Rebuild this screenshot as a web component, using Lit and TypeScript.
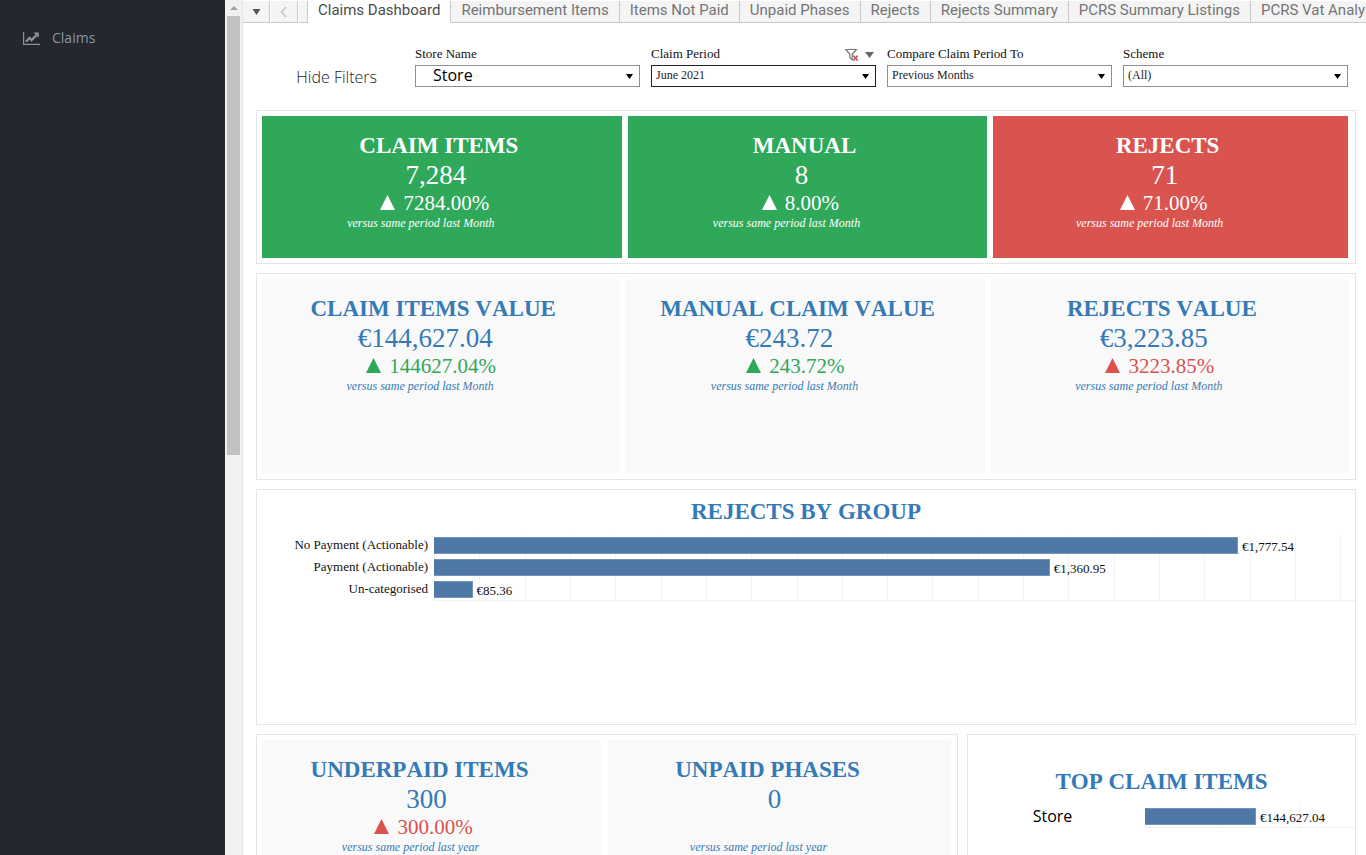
import { LitElement, html, css, svg, nothing } from "lit";
import { customElement, property, state } from "lit/decorators.js";
import { classMap } from "lit/directives/class-map.js";
import { styleMap } from "lit/directives/style-map.js";

interface Bar {
  label: string;
  value: number;
}

const euro = (n: number) =>
  "€" + n.toLocaleString("en-US", { minimumFractionDigits: 2, maximumFractionDigits: 2 });

@customElement("kpi-card")
export class KpiCard extends LitElement {
  @property() heading = "";
  @property() value = "";
  @property() change = "";
  @property() period = "Month";
  @property() tone = "up";
  @property({ reflect: true }) variant = "value";

  static styles = css`
    :host {
      display: block;
      box-sizing: border-box;
      padding-top: 16px;
      background: #f9f9f9;
      color: #337ab7;
      font-family: "Liberation Serif", "Times New Roman", serif;
      text-align: center;
      white-space: nowrap;
    }
    :host([variant="good"]) {
      background: #2fa85a;
      color: #fff;
    }
    :host([variant="bad"]) {
      background: #d9534f;
      color: #fff;
    }
    .title {
      margin: 0;
      padding-right: 16px;
      font-size: 23px;
      line-height: 28px;
      font-weight: bold;
      font-kerning: none;
    }
    .figure {
      margin: 0;
      padding-right: 32px;
      font-size: 27px;
      line-height: 30px;
    }
    .change {
      margin: 0;
      padding-right: 20px;
      min-height: 27px;
      font-size: 21px;
      line-height: 27px;
    }
    .mark {
      width: 15px;
      height: 15px;
      margin-right: 8px;
      fill: currentColor;
    }
    .up {
      color: #2fa85a;
    }
    .down {
      color: #d9534f;
    }
    .note {
      margin: 0;
      padding-right: 42px;
      font-size: 12px;
      line-height: 12px;
      font-style: italic;
    }
    .period {
      color: #4e79a7;
    }
    :host([variant="good"]) .title,
    :host([variant="bad"]) .title {
      padding-right: 6px;
    }
    :host([variant="good"]) .figure,
    :host([variant="bad"]) .figure {
      padding-right: 12px;
    }
    :host([variant="good"]) .change,
    :host([variant="bad"]) .change {
      padding-right: 14px;
      color: #fff;
    }
    :host([variant="good"]) .period,
    :host([variant="bad"]) .period {
      color: #fff;
    }
    :host([variant="count"]) .title {
      padding-right: 24px;
    }
    :host([variant="count"]) .figure {
      padding-right: 10px;
    }
    :host([variant="count"]) .change {
      padding-right: 16px;
    }
    :host([variant="count"]) .period {
      color: inherit;
    }
  `;

  render() {
    return html`
      <h2 class="title">${this.heading}</h2>
      <p class="figure">${this.value}</p>
      <p class="change ${this.tone}">
        ${this.change
          ? html`<svg class="mark" viewBox="0 0 15 15" aria-hidden="true"><path d="M7.5 0 15 15H0z" /></svg>${this.change}`
          : nothing}
      </p>
      <p class="note">versus same period last <span class="period">${this.period}</span></p>
    `;
  }
}

@customElement("bar-chart")
export class BarChart extends LitElement {
  @property({ attribute: false }) bars: Bar[] = [];
  @property({ type: Number }) max = 100;
  @property({ reflect: true }) variant = "wide";

  static styles = css`
    :host {
      display: grid;
      grid-template-columns: 177px 1fr;
      font: 13px/22px "Liberation Serif", "Times New Roman", serif;
      color: #111;
    }
    .labels {
      padding-right: 6px;
      text-align: right;
    }
    .label,
    .row {
      height: 22px;
      white-space: nowrap;
    }
    .plot {
      border-bottom: 1px solid #f0f0f0;
      background: repeating-linear-gradient(to right, #f3f3f3 0 1px, transparent 1px 4.92%);
    }
    .row {
      display: flex;
      align-items: center;
      gap: 4px;
    }
    .bar {
      box-sizing: border-box;
      height: 17px;
      flex: none;
      background: #4e79a7;
      border: 1px solid #7294b8;
      border-left: 0;
    }
    .amount {
      line-height: 22px;
      padding-top: 3px;
    }
    :host([variant="narrow"]) .labels {
      padding-right: 8px;
      text-align: center;
      font: 16px/22px "Open Sans", "Noto Sans", sans-serif;
      color: #000;
    }
    :host([variant="narrow"]) .plot {
      background: repeating-linear-gradient(to right, #f3f3f3 0 1px, transparent 1px 36.6%);
    }
  `;

  render() {
    return html`
      <div class="labels">${this.bars.map((b) => html`<div class="label">${b.label}</div>`)}</div>
      <div class="plot">
        ${this.bars.map(
          (b) => html`<div class="row">
            <div class="bar" style=${styleMap({ width: `${(b.value / this.max) * 100}%` })}></div>
            <span class="amount">${euro(b.value)}</span>
          </div>`
        )}
      </div>
    `;
  }
}

@customElement("app-root")
export class AppRoot extends LitElement {
  @state() private active = 0;

  private tabs = [
    "Claims Dashboard",
    "Reimbursement Items",
    "Items Not Paid",
    "Unpaid Phases",
    "Rejects",
    "Rejects Summary",
    "PCRS Summary Listings",
    "PCRS Vat Analysis",
  ];

  private filters = [
    { id: "store", label: "Store Name", value: "Store" },
    { id: "period", label: "Claim Period", value: "June 2021" },
    { id: "compare", label: "Compare Claim Period To", value: "Previous Months" },
    { id: "scheme", label: "Scheme", value: "(All)" },
  ];

  private rejects: Bar[] = [
    { label: "No Payment (Actionable)", value: 1777.54 },
    { label: "Payment (Actionable)", value: 1360.95 },
    { label: "Un-categorised", value: 85.36 },
  ];

  private topItems: Bar[] = [{ label: "Store", value: 144627.04 }];

  static styles = css`
    :host {
      display: flex;
      height: 100vh;
      overflow: hidden;
      background: #fff;
      font-family: "Liberation Serif", "Times New Roman", serif;
    }
    .sidebar {
      flex: 0 0 225px;
      background: #24272e;
    }
    .nav-link {
      display: flex;
      align-items: center;
      gap: 12px;
      padding: 27px 23px;
      color: #8595a8;
      font: 14px/22px "Open Sans", "Noto Sans", sans-serif;
      text-decoration: none;
    }
    .nav-icon {
      width: 17px;
      height: 13px;
      fill: none;
      stroke: #8a919c;
    }
    .scroll {
      flex: 0 0 17px;
      display: flex;
      flex-direction: column;
      align-items: center;
      background: #f1f1f1;
      border-right: 1px solid #e4e4e4;
    }
    .scroll-up {
      width: 8px;
      height: 16px;
      fill: #a3a3a3;
    }
    .scroll-thumb {
      width: 13px;
      height: 51.3%;
      background: #c1c1c1;
    }
    .main {
      flex: 1;
      min-width: 0;
      overflow: hidden;
    }
    .tabs {
      display: flex;
      height: 22px;
      padding-top: 1px;
      overflow: hidden;
    }
    .tab,
    .tool {
      flex: none;
      box-sizing: border-box;
      height: 22px;
      margin: 0;
      border: 0;
      border-right: 1px solid #c8c8c8;
      border-bottom: 1px solid #c8c8c8;
      background: #f4f4f4;
      white-space: nowrap;
    }
    .tab {
      padding: 0 10px 2px;
      color: #757575;
      font: 15px/19px "Roboto", "Open Sans", sans-serif;
    }
    .tab.active {
      background: #fff;
      border-bottom-color: #fff;
      color: #4c4c4c;
    }
    .tool {
      width: 27px;
      margin-right: 1px;
      padding: 0;
    }
    .tool-icon {
      display: block;
      width: 9px;
      height: 10px;
      margin: 0 auto;
    }
    .spacer {
      flex: 0 0 8px;
      border-right: 1px solid #c8c8c8;
      border-bottom: 1px solid #c8c8c8;
      background: #f4f4f4;
    }
    .filters {
      display: grid;
      grid-template-columns: 161px repeat(4, 1fr);
      column-gap: 11px;
      padding: 22px 18px 23px 0;
    }
    .hide {
      align-self: end;
      justify-self: end;
      margin: 0 27px 0 0;
      padding: 0;
      border: 0;
      background: none;
      color: #222;
      font: 300 16px/20px "Open Sans", "Noto Sans", sans-serif;
      white-space: nowrap;
    }
    .filter-head {
      display: flex;
      align-items: center;
      gap: 6px;
      height: 20px;
    }
    .filter-label {
      flex: 1;
      padding-bottom: 2px;
      color: #111;
      font-size: 13px;
      line-height: 18px;
    }
    .clear {
      width: 14px;
      height: 14px;
    }
    .caret {
      width: 9px;
      height: 6px;
      margin-right: 2px;
      fill: #666;
    }
    .box {
      display: grid;
      align-items: center;
    }
    .select {
      grid-area: 1 / 1;
      box-sizing: border-box;
      width: 100%;
      height: 22px;
      padding: 0 20px 2px 4px;
      border: 1px solid #8f8f8f;
      border-radius: 0;
      background: #fff;
      appearance: none;
      color: #222;
      font: 12px/18px "Liberation Serif", "Times New Roman", serif;
    }
    .select.current {
      border-color: #222;
    }
    .select.large {
      padding-left: 17px;
      padding-bottom: 4px;
      color: #000;
      font: 16px/18px "Open Sans", "Noto Sans", sans-serif;
    }
    .arrow {
      grid-area: 1 / 1;
      justify-self: end;
      width: 7px;
      height: 5px;
      margin-right: 7px;
      pointer-events: none;
      fill: #000;
    }
    .panels {
      display: flex;
      flex-direction: column;
      gap: 9px;
      padding: 0 10px 0 13px;
    }
    .panel {
      box-sizing: border-box;
      border: 1px solid #e5e5e5;
      background: #fff;
    }
    .counts {
      display: grid;
      grid-template-columns: 360fr 360fr 355fr;
      gap: 6px;
      min-height: 154px;
      padding: 5px 7px 5px 5px;
    }
    .values {
      display: grid;
      grid-template-columns: repeat(3, 1fr);
      gap: 6px;
      min-height: 207px;
      padding: 5px 6px 6px 5px;
    }
    .chart {
      min-height: 236px;
    }
    .chart-title {
      margin: 0;
      padding: 8px 0;
      color: #337ab7;
      font-size: 23px;
      line-height: 28px;
      text-align: center;
      font-kerning: none;
    }
    .bottom {
      display: grid;
      grid-template-columns: 702fr 389fr;
      gap: 9px;
    }
    .unpaid {
      display: grid;
      grid-template-columns: 339fr 343fr;
      gap: 7px;
      min-height: 208px;
      padding: 5px 6px 6px 5px;
    }
    .top-title {
      padding: 33px 0 9px;
    }
  `;

  private renderFilter(f: { id: string; label: string; value: string }) {
    return html`
      <div class="filter">
        <div class="filter-head">
          <label class="filter-label" for=${f.id}>${f.label}</label>
          ${f.id === "period"
            ? html`<svg class="clear" viewBox="0 0 14 14" aria-hidden="true">
                  <path d="M.8 1.5h10.6L7.2 6v5.6L4.8 9.6V6z" fill="none" stroke="#777" stroke-width="1.2" />
                  <path d="M8.2 7.6l4.6 5M12.8 7.6l-4.6 5" stroke="#c85a56" stroke-width="1.6" />
                </svg>
                <svg class="caret" viewBox="0 0 9 6" aria-hidden="true"><path d="M0 0h9L4.5 6z" /></svg>`
            : nothing}
        </div>
        <div class="box">
          <select
            id=${f.id}
            class=${classMap({ select: true, current: f.id === "period", large: f.id === "store" })}
          >
            <option>${f.value}</option>
          </select>
          <svg class="arrow" viewBox="0 0 7 5" aria-hidden="true"><path d="M0 0h7L3.5 5z" /></svg>
        </div>
      </div>
    `;
  }

  render() {
    return html`
      <nav class="sidebar">
        <a class="nav-link" href="#claims">
          <svg class="nav-icon" viewBox="0 0 17 13" aria-hidden="true">
            ${svg`<path d="M.6 0v12.3H17" stroke-width="1.2" />
            <path d="M3 9.6 6.6 6l2 2 5-5" stroke-width="2.4" />
            <path d="M10.600 .6h5.2v5.200z" fill="#8a919c" stroke="none" />`}
          </svg>
          Claims
        </a>
      </nav>
      <div class="scroll" aria-hidden="true">
        <svg class="scroll-up" viewBox="0 0 8 16"><path d="M0 10h8L4 6z" /></svg>
        <div class="scroll-thumb"></div>
      </div>
      <main class="main">
        <div class="tabs">
          <button class="tool" aria-label="All tabs">
            <svg class="tool-icon" viewBox="0 0 9 10"><path d="M.5 2h8L4.5 8z" fill="#555" /></svg>
          </button>
          <button class="tool" aria-label="Previous tab">
            <svg class="tool-icon" viewBox="0 0 9 10">
              <path d="M6 0 1.500 5 6 10" fill="none" stroke="#c0c0c0" stroke-width="1.300" />
            </svg>
          </button>
          <div class="spacer"></div>
          ${this.tabs.map(
            (t, i) => html`<button
              class=${classMap({ tab: true, active: i === this.active })}
              @click=${() => (this.active = i)}
            >${t}</button>`
          )}
        </div>
        <div class="filters">
          <button class="hide">Hide Filters</button>
          ${this.filters.map((f) => this.renderFilter(f))}
        </div>
        <div class="panels">
          <section class="panel counts">
            <kpi-card variant="good" heading="CLAIM ITEMS" value="7,284" change="7284.00%"></kpi-card>
            <kpi-card variant="good" heading="MANUAL" value="8" change="8.00%"></kpi-card>
            <kpi-card variant="bad" heading="REJECTS" value="71" change="71.00%"></kpi-card>
          </section>
          <section class="panel values">
            <kpi-card heading="CLAIM ITEMS VALUE" value="€144,627.04" change="144627.04%"></kpi-card>
            <kpi-card heading="MANUAL CLAIM VALUE" value="€243.72" change="243.72%"></kpi-card>
            <kpi-card heading="REJECTS VALUE" value="€3,223.85" change="3223.85%" tone="down"></kpi-card>
          </section>
          <section class="panel chart">
            <h2 class="chart-title">REJECTS BY GROUP</h2>
            <bar-chart .bars=${this.rejects} max="2036"></bar-chart>
          </section>
          <div class="bottom">
            <section class="panel unpaid">
              <kpi-card variant="count" heading="UNDERPAID ITEMS" value="300" change="300.00%" tone="down" period="year"></kpi-card>
              <kpi-card variant="count" heading="UNPAID PHASES" value="0" period="year"></kpi-card>
            </section>
            <section class="panel">
              <h2 class="chart-title top-title">TOP CLAIM ITEMS</h2>
              <bar-chart variant="narrow" .bars=${this.topItems} max="273600"></bar-chart>
            </section>
          </div>
        </div>
      </main>
    `;
  }
}
